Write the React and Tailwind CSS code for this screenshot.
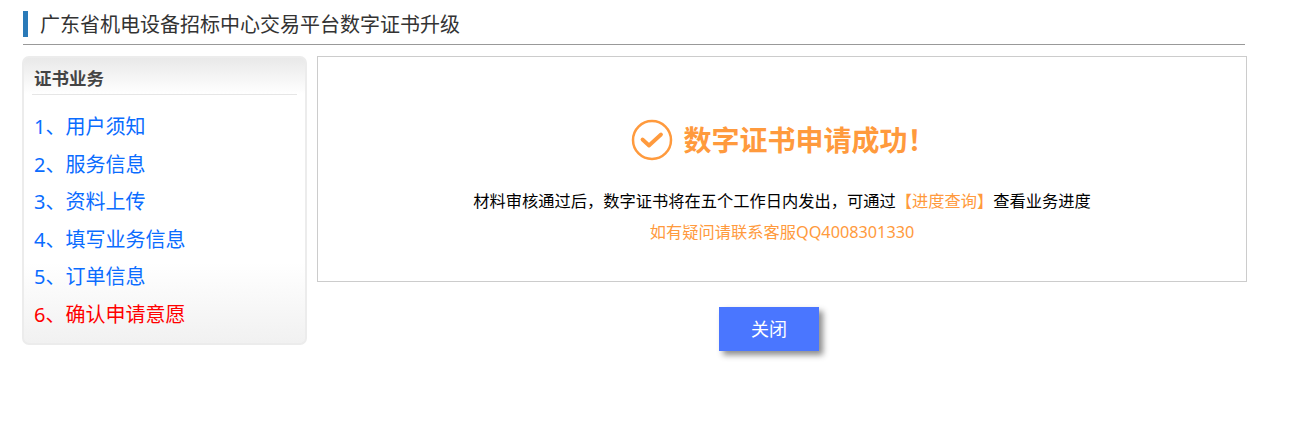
const F = '"Noto Sans","Noto Sans CJK SC",sans-serif';
const items = [
  ["1、用户须知", "h-[38px]"],
  ["2、服务信息", "h-[37px]"],
  ["3、资料上传", "h-[38px]"],
  ["4、填写业务信息", "h-[37px]"],
  ["5、订单信息", "h-[38px]"],
  ["6、确认申请意愿", "h-[37px]"],
];

export default function App() {
  return (
    <div className="w-[1292px] h-[434px] bg-white overflow-hidden" style={{ fontFamily: F }}>
      <div className="pt-[11px] pl-[23px] w-[1245px]">
        <div className="border-b border-[#999] h-[34px] w-[1222px]">
          <div className="border-l-[5px] border-[#2a7ab8] h-[26px] pl-[12px] text-[20px] leading-[28px] text-[#333]">
            广东省机电设备招标中心交易平台数字证书升级
          </div>
        </div>
      </div>
      <div className="flex pt-[11px] pl-[22px] gap-[10px] items-start">
        <div className="w-[285px] h-[289px] rounded-[7px] border-2 border-[#ececec] bg-[linear-gradient(to_bottom,#e9e9e9_0px,#ffffff_36px,#ffffff_205px,#f1f1f1_100%)] px-[8px]">
          <div className="h-[37px] border-b border-[#e6e6e6] pl-[2px] text-[17.5px] font-bold leading-[40px] text-[#444]">
            证书业务
          </div>
          <div className="pt-[13px] pl-[2px]">
            {items.map(([t, h], i) => (
              <div key={t} className={`${h} text-[20px] leading-[37px] ${i === 5 ? "text-[#ff0000]" : "text-[#0a6cff]"}`}>
                {t}
              </div>
            ))}
          </div>
        </div>
        <div className="w-[930px]">
          <div className="h-[226px] border border-[#ccc] flex flex-col items-center pt-[61px]">
            <div className="flex items-center gap-[10px] h-[44px] ml-[3px]">
              <svg width="42" height="42" viewBox="0 0 42 42" fill="none" className="shrink-0">
                <circle cx="21" cy="21" r="19" stroke="#ff9a3d" strokeWidth="2.5" />
                <path d="M11.5 20.5 L18 26.5 L30 15.5" stroke="#ff9a3d" strokeWidth="3.8" strokeLinecap="round" strokeLinejoin="round" />
              </svg>
              <span className="text-[28px] font-bold text-[#ff9a3d] leading-[44px]">数字证书申请成功！</span>
            </div>
            <div className="mt-[26px] text-[16.25px] leading-[26px] text-black">
              材料审核通过后，数字证书将在五个工作日内发出，可通过<span className="text-[#ff9a3d]">【进度查询】</span>查看业务进度
            </div>
            <div className="mt-[5px] text-[16.25px] leading-[26px] text-[#ff9a3d]">如有疑问请联系客服QQ4008301330</div>
          </div>
          <div className="flex justify-center mt-[25px] pr-[26px]">
            <button className="w-[100px] h-[44px] bg-[#4a76ff] text-white text-[18px] shadow-[4px_4px_6px_rgba(0,0,0,0.45)]">关闭</button>
          </div>
        </div>
      </div>
    </div>
  );
}
